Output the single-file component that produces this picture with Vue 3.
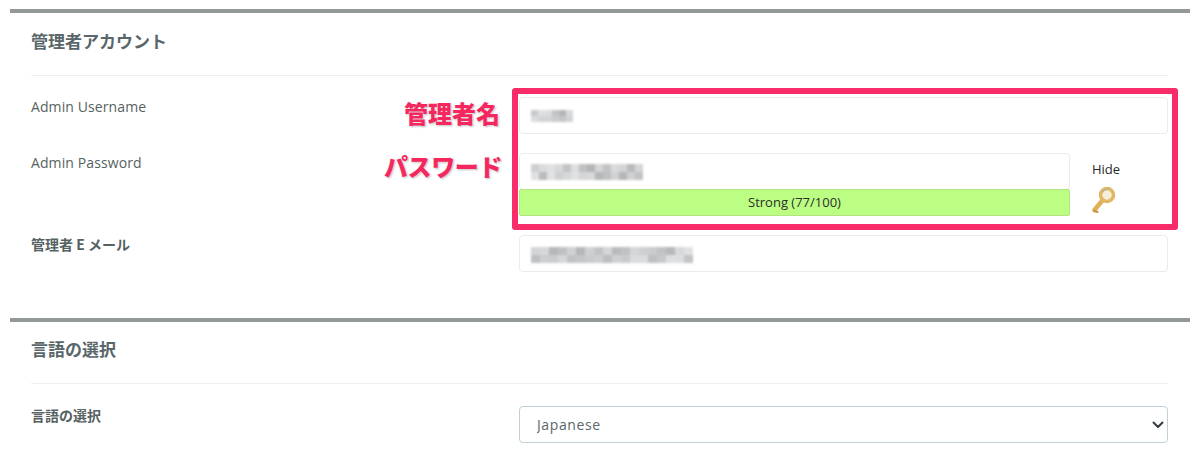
<script setup>
const tone = (seed, n) => {
  const out = []
  let v = seed
  for (let i = 0; i < n; i++) {
    v = (v * 137 + 71) % 251
    out.push(172 + (v % 50))
  }
  return out
}
const mosaics = {
  user: tone(11, 12),
  pass: tone(29, 28),
  mail: tone(47, 36)
}
const gray = (g) => ({ background: `rgb(${g},${g + 2},${g + 3})` })
</script>

<template>
  <main class="page">
    <section class="panel">
      <h2 class="panel-title">管理者アカウント</h2>
      <div class="rows">
        <div class="row">
          <label class="label">Admin Username</label>
          <div class="input"><span class="mosaic user"><i v-for="(g, i) in mosaics.user" :key="i" :style="gray(g)"></i></span></div>
        </div>
        <div class="row">
          <label class="label">Admin Password</label>
          <div class="pass-wrap">
            <div class="pass-main">
              <div class="input"><span class="mosaic pass"><i v-for="(g, i) in mosaics.pass" :key="i" :style="gray(g)"></i></span></div>
              <div class="strength">Strong (77/100)</div>
            </div>
            <div class="pass-side">
              <span class="hide">Hide</span>
              <svg class="key" width="26" height="28" viewBox="0 0 26 28">
                <path d="M4.5 24 L14 12.5" stroke="#e0b058" stroke-width="4.5" stroke-linecap="round" fill="none"/>
                <path d="M4 25 L7.5 26" stroke="#c8933a" stroke-width="2" stroke-linecap="round" fill="none"/>
                <circle cx="17" cy="9" r="6.5" fill="#f4eeda" stroke="#e2b662" stroke-width="3.5"/>
                <path d="M12.5 6 A6 6 0 0 1 19 3.5" stroke="#b9b4a2" stroke-width="1.5" fill="none"/>
              </svg>
            </div>
          </div>
        </div>
        <div class="row">
          <label class="label cjk mail-label">管理者 E メール</label>
          <div class="input"><span class="mosaic mail"><i v-for="(g, i) in mosaics.mail" :key="i" :style="gray(g)"></i></span></div>
        </div>
      </div>

      <div class="highlight"></div>
      <span class="note note-name">管理者名</span>
      <span class="note note-pass">パスワード</span>
    </section>

    <section class="panel second">
      <h2 class="panel-title">言語の選択</h2>
      <div class="rows">
        <div class="row">
          <label class="label cjk">言語の選択</label>
          <div class="select-wrap">
            <select class="select">
              <option>Japanese</option>
            </select>
            <svg class="chevron" width="12" height="8" viewBox="0 0 12 8">
              <path d="M1.5 1.5 L6 6 L10.5 1.5" stroke="#343a40" stroke-width="2" stroke-linecap="round" stroke-linejoin="round" fill="none"/>
            </svg>
          </div>
        </div>
      </div>
    </section>
  </main>
</template>

<style>
html, body { margin: 0; background: #fff; overflow: hidden; }
</style>

<style scoped>
.page {
  width: 1200px;
  height: 472px;
  padding: 9px 10px 0;
  box-sizing: border-box;
  overflow: hidden;
  font-family: "Open Sans", "Noto Sans CJK JP", sans-serif;
  color: #56625f;
}
.panel {
  position: relative;
  border-top: 4px solid #939997;
  padding: 0 22px 0 21px;
}
.second { margin-top: 46px; }
.panel-title {
  margin: 0;
  height: 63px;
  box-sizing: border-box;
  padding-top: 16px;
  border-bottom: 1px solid #eef0f0;
  font-family: "Noto Sans CJK JP", sans-serif;
  font-size: 17px;
  line-height: 24px;
  font-weight: 700;
  color: #59666a;
}
.second .panel-title { height: 62px; padding-top: 15px; }
.rows {
  display: flex;
  flex-direction: column;
  gap: 19px;
  padding-top: 21px;
}
.second .rows { padding-top: 22px; }
.row {
  display: grid;
  grid-template-columns: 488px 1fr;
}
.label {
  font-size: 14px;
  line-height: 20px;
  letter-spacing: 0.1px;
}
.label.cjk {
  font-family: "Noto Sans CJK JP", sans-serif;
  font-weight: 700;
  letter-spacing: 0;
  margin-top: -1px;
}
.label.mail-label { margin-top: -1px; }
.input {
  height: 37px;
  box-sizing: border-box;
  border: 1px solid #e9ecec;
  border-radius: 4px;
  background: #fff;
  position: relative;
  display: flex;
  align-items: center;
  padding-left: 11px;
}
.mosaic {
  display: grid;
  filter: blur(1.3px);
  opacity: 0.9;
}
.mosaic i { display: block; }
.user { grid-template-columns: repeat(6, 7px); grid-auto-rows: 6px; margin-top: 1px; }
.pass { grid-template-columns: repeat(14, 8px); grid-auto-rows: 8px; }
.mail { grid-template-columns: repeat(18, 9px); grid-auto-rows: 8px; margin-top: 2px; }
.pass-wrap {
  display: grid;
  grid-template-columns: 551px 1fr;
}
.strength {
  height: 27px;
  margin-top: -1px;
  position: relative;
  background: #bcfd83;
  border: 1px solid #b2e57f;
  border-radius: 2px;
  box-sizing: border-box;
  text-align: center;
  font-size: 13px;
  line-height: 25px;
  color: #2b2f2b;
}
.pass-side {
  display: flex;
  flex-direction: column;
  align-items: flex-start;
  padding-left: 20px;
  padding-top: 7px;
}
.hide {
  font-size: 13px;
  line-height: 18px;
  color: #26292a;
  margin-left: 2px;
}
.key {
  margin-top: 8px;
  filter: blur(0.5px);
}
.highlight {
  position: absolute;
  left: 502px;
  top: 75px;
  width: 666px;
  height: 142px;
  box-sizing: border-box;
  border: 6.5px solid #f72c69;
  border-radius: 3px;
  pointer-events: none;
}
.note {
  position: absolute;
  font-family: "Noto Sans CJK JP", sans-serif;
  font-weight: 900;
  font-size: 24px;
  line-height: 30px;
  color: #f4285f;
  text-shadow: 0 0 2px #fff, 1px 1px 2px rgba(0, 0, 0, 0.3);
  white-space: nowrap;
}
.note-name { right: 690px; top: 85px; }
.note-pass { right: 688px; top: 138px; letter-spacing: -0.4px; }
.select-wrap { position: relative; }
.select {
  display: block;
  width: 100%;
  height: 37px;
  box-sizing: border-box;
  appearance: none;
  border: 1px solid #bfd0d6;
  border-radius: 4px;
  background: #fff;
  padding: 0 12px 0 17px;
  font-family: "Open Sans", sans-serif;
  font-size: 14px;
  letter-spacing: 0.6px;
  color: #59666a;
}
.chevron {
  position: absolute;
  right: 4px;
  top: 15px;
  pointer-events: none;
}
</style>
